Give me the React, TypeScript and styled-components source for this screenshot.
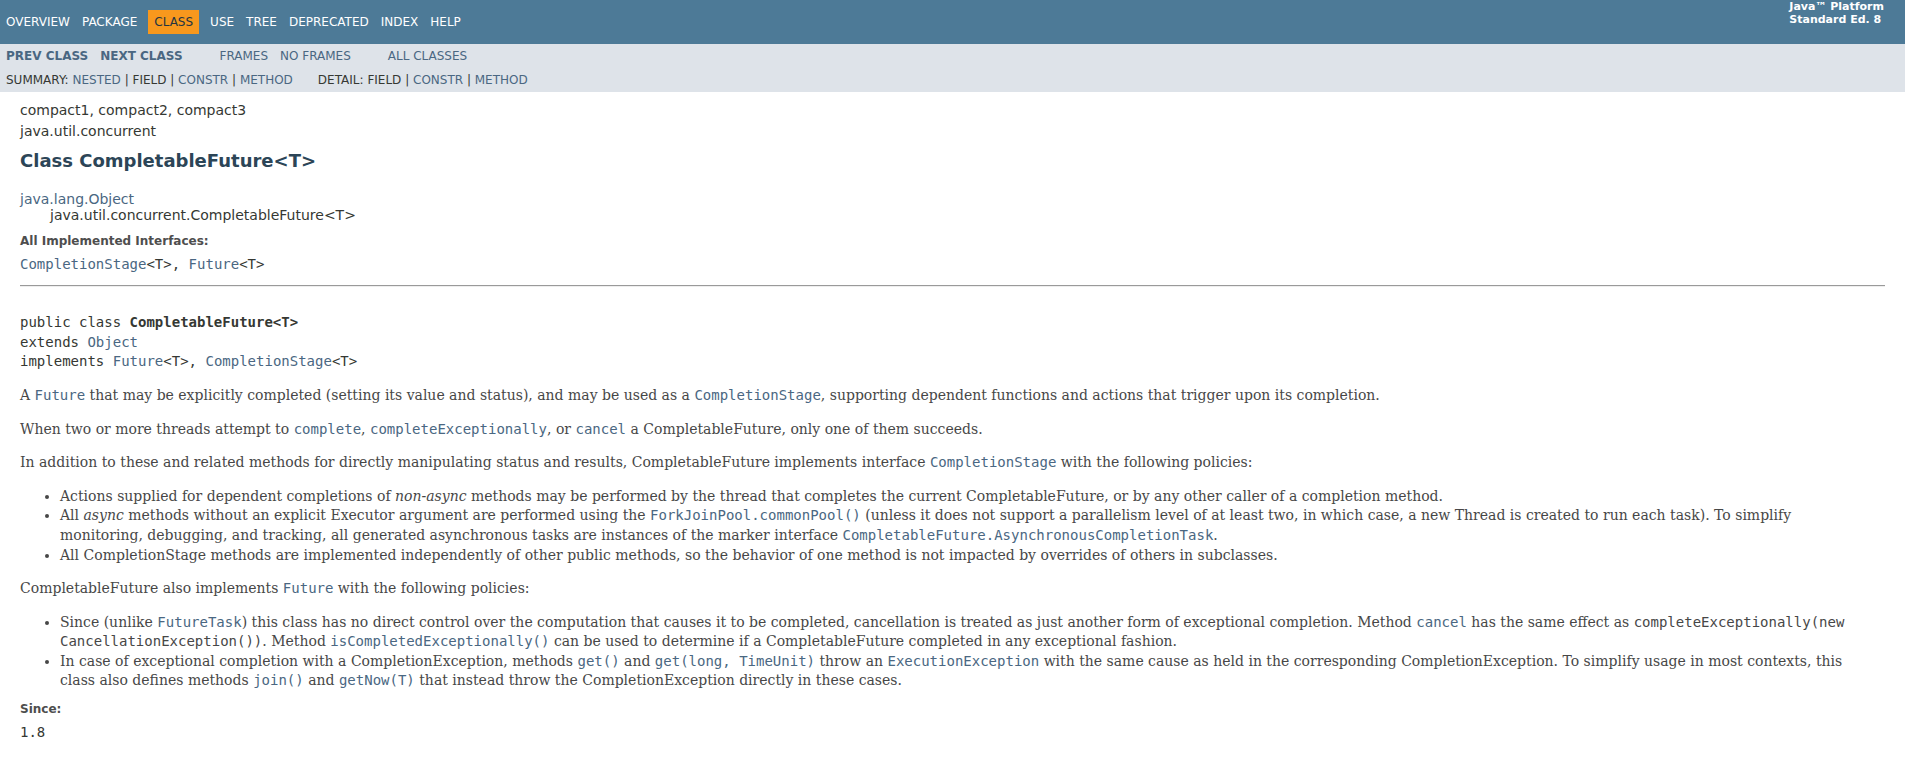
import React from 'react';
import styled, { createGlobalStyle, css } from 'styled-components';

const GlobalStyle = createGlobalStyle`
  html, body { margin: 0; padding: 0; background: #ffffff; }
  body {
    font-family: 'DejaVu Sans', Arial, Helvetica, sans-serif;
    font-size: 14px;
    color: #353833;
  }
`;

const Link = styled.a`
  color: #4a6782;
  text-decoration: none;
`;

/* ---------- top navigation ---------- */
const TopNav = styled.div`
  display: flex;
  justify-content: space-between;
  align-items: flex-start;
  background-color: #4d7a97;
  color: #ffffff;
  height: 34px;
  padding-top: 10px;
  font-size: 12px;
  overflow: hidden;
`;

const NavList = styled.ul`
  display: flex;
  margin: 0 25px 0 0;
  padding: 0;
  list-style: none;
`;

const NavItem = styled.li<{ $current?: boolean }>`
  padding: 5px 6px;
  line-height: 14px;
  text-transform: uppercase;
  white-space: nowrap;
  ${({ $current }) =>
    $current &&
    css`
      background-color: #f8981d;
      color: #253441;
      margin: 0 5px;
    `}
`;

const TopLink = styled.a`
  color: #ffffff;
  text-decoration: none;
`;

const AboutLanguage = styled.div`
  margin-top: -9px;
  padding: 0 21px;
  font-size: 11px;
  font-weight: bold;
  line-height: 12.8px;
  white-space: nowrap;
`;

/* ---------- sub navigation ---------- */
const SubNav = styled.div`
  background-color: #dee3e9;
  font-size: 12px;
  overflow: hidden;
`;

const SubNavRow = styled.div`
  display: flex;
`;

const SubNavDetails = styled.div`
  display: flex;
  padding: 5px 0 5px 6px;
  text-transform: uppercase;
`;

const SubNavList = styled.ul`
  display: flex;
  margin: 0 25px 0 0;
  padding: 0;
  list-style: none;
  line-height: 14px;
  white-space: pre;
`;

const SubNavItem = styled.li``;

const SubNavLink = styled(Link)<{ $strong?: boolean }>`
  font-weight: ${({ $strong }) => ($strong ? 'bold' : 'normal')};
`;

/* ---------- header ---------- */
const Header = styled.div`
  margin: 0 20px;
  padding-top: 5px;
`;

const SubTitle = styled.div`
  margin-top: 5px;
  line-height: 16.3px;
`;

const Title = styled.h2`
  color: #2c4557;
  font-size: 18px;
  font-weight: bold;
  line-height: 21px;
  margin: 10px 0;
`;

/* ---------- content ---------- */
const Content = styled.div`
  padding: 10px 20px;
`;

const Inheritance = styled.div`
  line-height: 16.3px;
`;

const InheritanceChild = styled.div`
  margin-left: 15px;
  padding-left: 15px;
`;

const Description = styled.div`
  line-height: 1.4;
`;

const DefList = styled.dl<{ $gap?: number }>`
  margin: ${({ $gap }) => $gap ?? 10}px 0 0;
`;

const DefTerm = styled.dt`
  font-size: 12px;
  font-weight: bold;
  color: #4e4e4e;
  line-height: 16.8px;
`;

const DefDesc = styled.dd`
  margin: 5px 0 0;
  font-family: 'DejaVu Sans Mono', monospace;
  font-size: 14px;
  line-height: 19.6px;
`;

const Rule = styled.hr`
  height: 0;
  border: none;
  border-top: 1px solid #9a9a9a;
  border-bottom: 1px solid #eeeeee;
  margin: 10px 0 26.6px;
`;

const Signature = styled.pre`
  margin: 0 0 14px;
  font-family: 'DejaVu Sans Mono', monospace;
  font-size: 14px;
  line-height: 19.6px;
`;

const TypeName = styled.span`
  font-weight: bold;
`;

const Block = styled.div`
  margin: 3px 10px 2px 0;
  color: #474747;
  font-family: 'DejaVu Serif', Georgia, 'Times New Roman', Times, serif;
  font-size: 14px;
  line-height: 19.6px;
`;

const Para = styled.p`
  margin: 14px 0;
`;

const Bullets = styled.ul<{ $flush?: boolean }>`
  margin: 14px 0 ${({ $flush }) => ($flush ? 0 : 14)}px;
  padding-left: 40px;
`;

const Bullet = styled.li``;

const Code = styled.code`
  font-family: 'DejaVu Sans Mono', monospace;
  font-size: 14px;
`;

const CodeLink: React.FC<{ children: React.ReactNode }> = ({ children }) => (
  <Link href="#">
    <Code>{children}</Code>
  </Link>
);

const topItems = ['Overview', 'Package', 'Class', 'Use', 'Tree', 'Deprecated', 'Index', 'Help'];

export default function App() {
  return (
    <>
      <GlobalStyle />
      <TopNav>
        <NavList title="Navigation">
          {topItems.map((item) =>
            item === 'Class' ? (
              <NavItem key={item} $current>
                {item}
              </NavItem>
            ) : (
              <NavItem key={item}>
                <TopLink href="#">{item}</TopLink>
              </NavItem>
            )
          )}
        </NavList>
        <AboutLanguage>
          Java™&nbsp;Platform
          <br />
          Standard&nbsp;Ed.&nbsp;8
        </AboutLanguage>
      </TopNav>

      <SubNav>
        <SubNavRow>
          <NavList>
            <NavItem>
              <SubNavLink href="#" $strong>
                Prev&nbsp;Class
              </SubNavLink>
            </NavItem>
            <NavItem>
              <SubNavLink href="#" $strong>
                Next&nbsp;Class
              </SubNavLink>
            </NavItem>
          </NavList>
          <NavList>
            <NavItem>
              <SubNavLink href="#">Frames</SubNavLink>
            </NavItem>
            <NavItem>
              <SubNavLink href="#">No&nbsp;Frames</SubNavLink>
            </NavItem>
          </NavList>
          <NavList>
            <NavItem>
              <SubNavLink href="#">All&nbsp;Classes</SubNavLink>
            </NavItem>
          </NavList>
        </SubNavRow>
        <SubNavDetails>
          <SubNavList>
            <SubNavItem>Summary:&nbsp;</SubNavItem>
            <SubNavItem>
              <SubNavLink href="#">Nested</SubNavLink>&nbsp;|&nbsp;
            </SubNavItem>
            <SubNavItem>Field&nbsp;|&nbsp;</SubNavItem>
            <SubNavItem>
              <SubNavLink href="#">Constr</SubNavLink>&nbsp;|&nbsp;
            </SubNavItem>
            <SubNavItem>
              <SubNavLink href="#">Method</SubNavLink>
            </SubNavItem>
          </SubNavList>
          <SubNavList>
            <SubNavItem>Detail:&nbsp;</SubNavItem>
            <SubNavItem>Field&nbsp;|&nbsp;</SubNavItem>
            <SubNavItem>
              <SubNavLink href="#">Constr</SubNavLink>&nbsp;|&nbsp;
            </SubNavItem>
            <SubNavItem>
              <SubNavLink href="#">Method</SubNavLink>
            </SubNavItem>
          </SubNavList>
        </SubNavDetails>
      </SubNav>

      <Header>
        <SubTitle>compact1, compact2, compact3</SubTitle>
        <SubTitle>java.util.concurrent</SubTitle>
        <Title>Class CompletableFuture&lt;T&gt;</Title>
      </Header>

      <Content>
        <Inheritance>
          <Link href="#">java.lang.Object</Link>
          <InheritanceChild>java.util.concurrent.CompletableFuture&lt;T&gt;</InheritanceChild>
        </Inheritance>

        <Description>
          <DefList>
            <DefTerm>All Implemented Interfaces:</DefTerm>
            <DefDesc>
              <Link href="#">CompletionStage</Link>&lt;T&gt;, <Link href="#">Future</Link>&lt;T&gt;
            </DefDesc>
          </DefList>
          <Rule />
          <Signature>
            public class <TypeName>CompletableFuture&lt;T&gt;</TypeName>
            {'\n'}extends <Link href="#">Object</Link>
            {'\n'}implements <Link href="#">Future</Link>&lt;T&gt;, <Link href="#">CompletionStage</Link>&lt;T&gt;
          </Signature>

          <Block>
            A <CodeLink>Future</CodeLink> that may be explicitly completed (setting its value and status), and
            may be used as a <CodeLink>CompletionStage</CodeLink>, supporting dependent functions and actions
            that trigger upon its completion.
            <Para>
              When two or more threads attempt to <CodeLink>complete</CodeLink>,{' '}
              <CodeLink>completeExceptionally</CodeLink>, or <CodeLink>cancel</CodeLink> a CompletableFuture,
              only one of them succeeds.
            </Para>
            <Para>
              In addition to these and related methods for directly manipulating status and results,
              CompletableFuture implements interface <CodeLink>CompletionStage</CodeLink> with the following
              policies:
            </Para>
            <Bullets>
              <Bullet>
                Actions supplied for dependent completions of <em>non-async</em> methods may be performed by the
                thread that completes the current CompletableFuture, or by any other caller of a completion
                method.
              </Bullet>
              <Bullet>
                All <em>async</em> methods without an explicit Executor argument are performed using the{' '}
                <CodeLink>ForkJoinPool.commonPool()</CodeLink> (unless it does not support a parallelism level
                of at least two, in which case, a new Thread is created to run each task). To simplify
                monitoring, debugging, and tracking, all generated asynchronous tasks are instances of the
                marker interface <CodeLink>CompletableFuture.AsynchronousCompletionTask</CodeLink>.
              </Bullet>
              <Bullet>
                All CompletionStage methods are implemented independently of other public methods, so the
                behavior of one method is not impacted by overrides of others in subclasses.
              </Bullet>
            </Bullets>
            <Para>
              CompletableFuture also implements <CodeLink>Future</CodeLink> with the following policies:
            </Para>
            <Bullets $flush>
              <Bullet>
                Since (unlike <CodeLink>FutureTask</CodeLink>) this class has no direct control over the
                computation that causes it to be completed, cancellation is treated as just another form of
                exceptional completion. Method <CodeLink>cancel</CodeLink> has the same effect as{' '}
                <Code>completeExceptionally(new CancellationException())</Code>. Method{' '}
                <CodeLink>isCompletedExceptionally()</CodeLink> can be used to determine if a CompletableFuture
                completed in any exceptional fashion.
              </Bullet>
              <Bullet>
                In case of exceptional completion with a CompletionException, methods{' '}
                <CodeLink>get()</CodeLink> and <CodeLink>get(long, TimeUnit)</CodeLink> throw an{' '}
                <CodeLink>ExecutionException</CodeLink> with the same cause as held in the corresponding
                CompletionException. To simplify usage in most contexts, this class also defines methods{' '}
                <CodeLink>join()</CodeLink> and <CodeLink>getNow(T)</CodeLink> that instead throw the
                CompletionException directly in these cases.
              </Bullet>
            </Bullets>
          </Block>

          <DefList $gap={10}>
            <DefTerm>Since:</DefTerm>
            <DefDesc>1.8</DefDesc>
          </DefList>
        </Description>
      </Content>
    </>
  );
}
